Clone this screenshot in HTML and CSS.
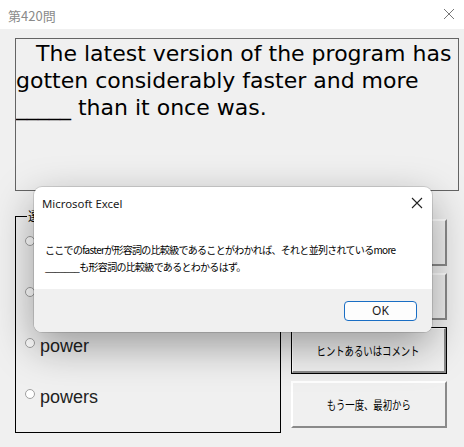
FILE: index.html
```html
<!DOCTYPE html>
<html lang="ja">
<head>
<meta charset="utf-8">
<link rel="stylesheet" href="styles.css">
</head>
<body>
<div class="window">
  <div class="titlebar">
    <span class="title">第420問</span>
    <svg class="close" width="12" height="12" viewBox="0 0 12 12"><path d="M1 1L11 11M11 1L1 11" stroke="#777" stroke-width="1" fill="none"/></svg>
  </div>
  <div class="client">
    <div class="question">The latest version of the program has gotten considerably faster and more _____ than it once was.</div>
    <div class="lower">
      <fieldset class="group">
        <legend>選択肢</legend>
        <label class="opt"><span class="radio"></span>powerful</label>
        <label class="opt"><span class="radio"></span>powerfully</label>
        <label class="opt"><span class="radio"></span>power</label>
        <label class="opt"><span class="radio"></span>powers</label>
      </fieldset>
      <div class="buttons">
        <div class="btn"><span class="lbl">解答</span></div>
        <div class="btn"><span class="lbl">次の問題</span></div>
        <div class="btn default"><span class="inner"><span class="lbl">ヒントあるいはコメント</span></span></div>
        <div class="btn"><span class="lbl">もう一度、最初から</span></div>
      </div>
    </div>
  </div>
  <div class="dialog">
    <div class="dlg-head">
      <span class="dlg-title">Microsoft Excel</span>
      <svg class="dlg-close" width="12" height="12" viewBox="0 0 12 12"><path d="M1 1L11 11M11 1L1 11" stroke="#222" stroke-width="1.1" fill="none"/></svg>
    </div>
    <div class="dlg-body">ここでのfasterが形容詞の比較級であることがわかれば、それと並列されているmore<br>_______も形容詞の比較級であるとわかるはず。</div>
    <div class="dlg-foot">
      <div class="ok">OK</div>
    </div>
  </div>
</div>
</body>
</html>
```
FILE: styles.css
```css
html, body {
  margin: 0;
  padding: 0;
}
body {
  width: 464px;
  height: 447px;
  overflow: hidden;
  background: #f0f0f0;
  font-family: "Liberation Sans", "Noto Sans CJK JP", sans-serif;
}
.window {
  position: relative;
  width: 464px;
  height: 447px;
  background: #f0f0f0;
}
.titlebar {
  height: 29px;
  background: #ffffff;
  display: flex;
  align-items: center;
  justify-content: space-between;
  padding: 0 9px 0 8px;
  box-sizing: border-box;
}
.title {
  font-family: "Noto Sans CJK JP", sans-serif;
  font-size: 13px;
  color: #8a8a8a;
  margin-top: 1px;
}
.close {
  margin-top: -2px;
}
.client {
  padding: 9px 5px 0 15px;
}
.question {
  height: 150px;
  border: 1px solid #646464;
  font-family: "DejaVu Sans", sans-serif;
  font-size: 22px;
  line-height: 27px;
  padding-top: 1px;
  text-indent: 20px;
  box-sizing: content-box;
  color: #000;
  overflow: hidden;
}
.lower {
  display: flex;
  margin-top: 18px;
  gap: 10px;
}
.group {
  margin: 0;
  width: 266px;
  height: 224px;
  box-sizing: border-box;
  border: 1px solid #000;
  padding: 6px 0 0 9px;
  display: flex;
  flex-direction: column;
  gap: 21px;
}
.group legend {
  font-family: "Noto Sans CJK JP", sans-serif;
  font-size: 12px;
  line-height: 14px;
  padding: 0 1px;
  margin-left: 2px;
  color: #000;
}
.opt {
  display: flex;
  align-items: center;
  height: 30px;
  font-family: "Liberation Sans", sans-serif;
  font-size: 18px;
  color: #222;
}
.radio {
  width: 8px;
  height: 8px;
  border: 1px solid #a0a0a0;
  border-radius: 50%;
  background: #fff;
  margin-right: 5px;
  margin-top: -6px;
}
.buttons {
  display: flex;
  flex-direction: column;
  gap: 7px;
  padding-top: 10px;
}
.btn {
  width: 156px;
  height: 47px;
  box-sizing: border-box;
  border-style: solid;
  border-width: 2px;
  border-color: #ffffff #8a8a8a #8a8a8a #ffffff;
  background: #f0f0f0;
  display: flex;
  align-items: center;
  justify-content: center;
  font-family: "Noto Sans CJK JP", sans-serif;
  font-size: 12px;
  color: #000;
}
.lbl {
  display: inline-block;
  white-space: nowrap;
  transform: scaleX(0.78);
}
.btn.default {
  border: 1px solid #000;
  padding: 0;
}
.btn.default .inner {
  flex: 1;
  align-self: stretch;
  display: flex;
  align-items: center;
  justify-content: center;
  border-style: solid;
  border-width: 1px 2px 2px 1px;
  border-color: #ffffff #8a8a8a #8a8a8a #ffffff;
}
.dialog {
  position: absolute;
  left: 34px;
  top: 187px;
  width: 398px;
  height: 145px;
  border-radius: 8px;
  background: #ffffff;
  box-shadow: 0 14px 42px rgba(0, 0, 0, 0.36), 0 0 0 1px rgba(0, 0, 0, 0.12);
  overflow: hidden;
  display: flex;
  flex-direction: column;
  font-family: "Noto Sans", "Noto Sans CJK JP", sans-serif;
}
.dlg-head {
  height: 32px;
  display: flex;
  align-items: center;
  justify-content: space-between;
  padding: 0 9px 0 8px;
}
.dlg-title {
  font-size: 11.4px;
  color: #1a1a1a;
}
.dlg-body {
  flex: 1;
  padding: 22px 0 0 11px;
  font-family: "Noto Sans CJK JP", sans-serif;
  font-size: 10px;
  line-height: 17px;
  letter-spacing: -0.7px;
  color: #000;
  white-space: nowrap;
}
.dlg-foot {
  height: 43px;
  background: #f0f0f0;
  display: flex;
  align-items: center;
  justify-content: flex-end;
  padding-right: 15px;
}
.ok {
  width: 73px;
  height: 20px;
  box-sizing: border-box;
  border: 1px solid #1a6ec4;
  border-radius: 4px;
  background: #fdfdfd;
  display: flex;
  align-items: center;
  justify-content: center;
  font-size: 12px;
  color: #1a1a1a;
}
```
